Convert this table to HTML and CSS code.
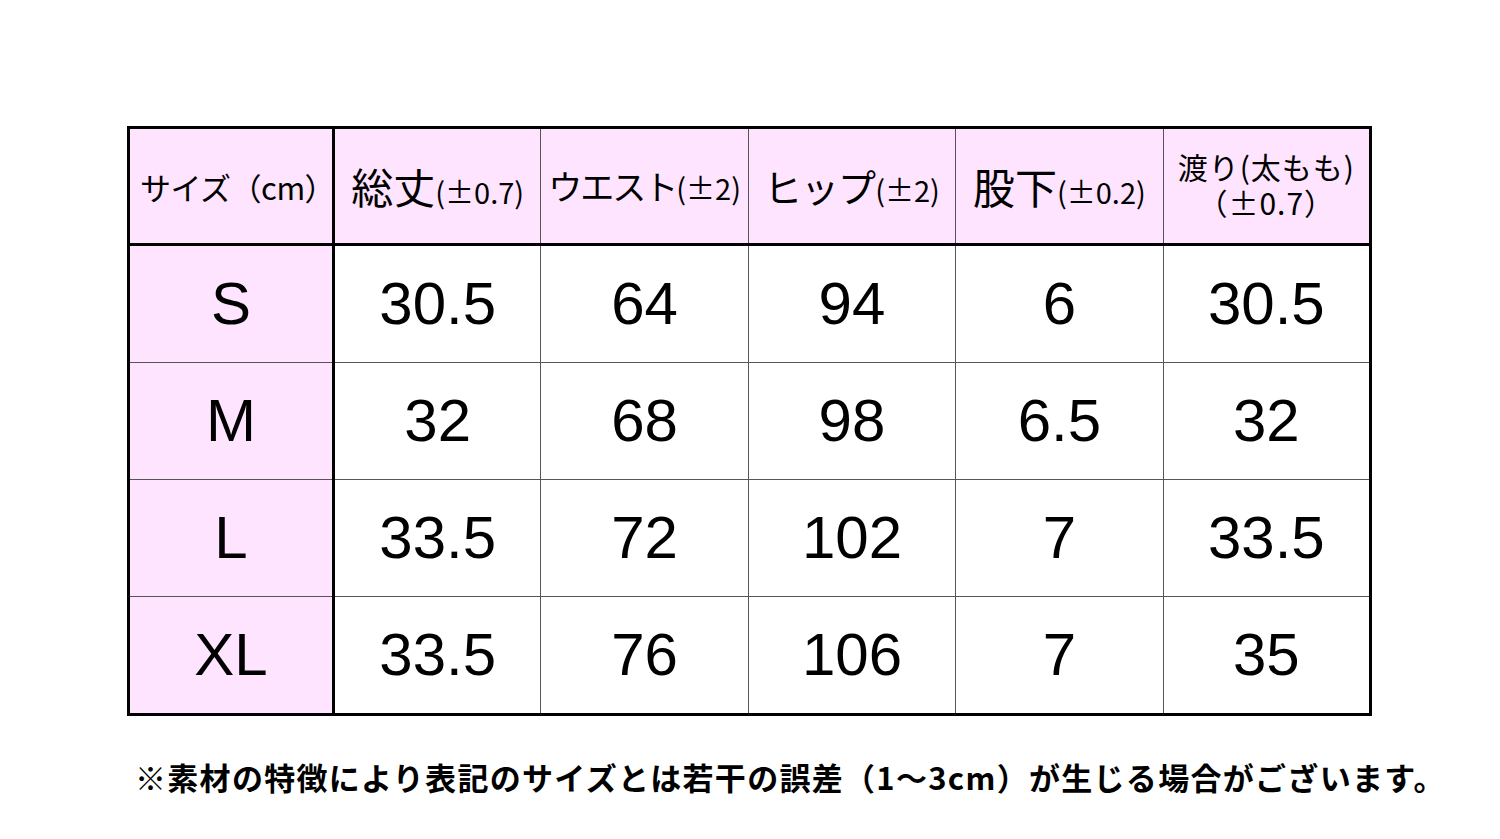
FILE: index.html
```html
<!DOCTYPE html>
<html lang="ja">
<head>
<meta charset="utf-8">
<link rel="stylesheet" href="styles.css">
</head>
<body>
<div class="page">
  <table class="size-table">
    <thead>
      <tr>
        <th class="label head-label"><span class="m first">サイズ（cm）</span></th>
        <th><span class="big">総丈</span><span class="tol">(±0.7)</span></th>
        <th><span class="mid">ウエスト</span><span class="tol">(±2)</span></th>
        <th><span class="big2">ヒップ</span><span class="tol">(±2)</span></th>
        <th><span class="big">股下</span><span class="tol">(±0.2)</span></th>
        <th class="two"><span class="m line">渡り(太もも)</span><span class="m line line2">（±0.7）</span></th>
      </tr>
    </thead>
    <tbody>
      <tr><th class="label">S</th><td>30.5</td><td>64</td><td>94</td><td>6</td><td>30.5</td></tr>
      <tr><th class="label">M</th><td>32</td><td>68</td><td>98</td><td>6.5</td><td>32</td></tr>
      <tr><th class="label">L</th><td>33.5</td><td>72</td><td>102</td><td>7</td><td>33.5</td></tr>
      <tr><th class="label">XL</th><td>33.5</td><td>76</td><td>106</td><td>7</td><td>35</td></tr>
    </tbody>
  </table>
  <p class="note">※素材の特徴により表記のサイズとは若干の誤差（1～3cm）が生じる場合がございます。</p>
</div>
</body>
</html>
```
FILE: styles.css
```css
html, body {
  margin: 0;
  padding: 0;
  background: #ffffff;
}
.page {
  width: 1500px;
  height: 839px;
  padding: 126px 0 0 127px;
  box-sizing: border-box;
}
.size-table {
  border-collapse: collapse;
  table-layout: fixed;
  width: 1245px;
  border: 3px solid #000;
}
.size-table th,
.size-table td {
  border: 1px solid #555;
  padding: 0;
  text-align: center;
  vertical-align: middle;
  color: #000;
  font-weight: normal;
}
.size-table thead th {
  height: 110px;
  background: #fee4fe;
  border-bottom: 3px solid #000;
  font-family: "Noto Sans CJK JP", sans-serif;
  white-space: nowrap;
  line-height: 1;
}
.size-table tbody td,
.size-table tbody th {
  height: 116px;
  font-family: "Liberation Sans", Arial, sans-serif;
  font-size: 60px;
  line-height: 1;
}
.size-table .label {
  width: 202px;
  border-right: 3px solid #000;
}
.size-table thead th.head-label {
  width: 192px;
  padding-left: 10px;
}
.size-table tbody th.label {
  background: #fee4fe;
}
.m {
  font-size: 30px;
  letter-spacing: 1px;
}
.first {
  font-size: 31px;
  letter-spacing: -0.5px;
}
.line {
  display: block;
  line-height: 36px;
}
.line2 {
  letter-spacing: 1px;
}
.big {
  font-size: 42px;
}
.big2 {
  font-size: 38px;
  letter-spacing: -1px;
}
.mid {
  font-size: 34px;
  letter-spacing: -2px;
}
.tol {
  font-size: 29px;
  letter-spacing: 0px;
}
.two {
  padding-bottom: 4px !important;
}
.note {
  margin: 45px 0 0 8px;
  font-family: "Noto Sans CJK JP", sans-serif;
  font-weight: bold;
  font-size: 31px;
  line-height: 1;
  letter-spacing: 1.3px;
  color: #000;
  white-space: nowrap;
}
```
